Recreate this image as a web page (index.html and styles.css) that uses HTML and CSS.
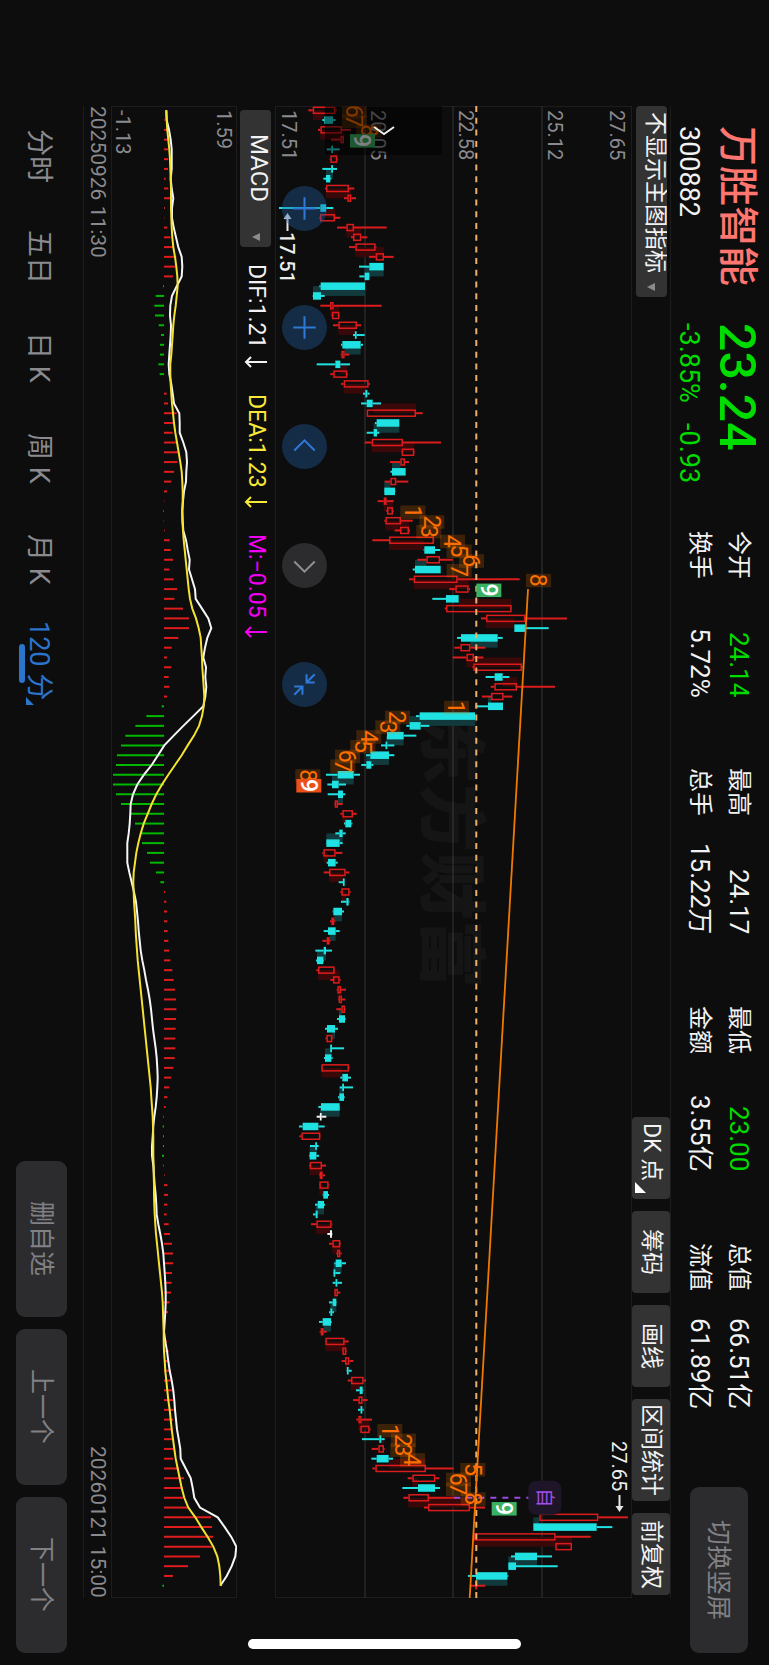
FILE: index.html
```html
<!DOCTYPE html>
<html lang="zh-CN">
<head>
<meta charset="utf-8">
<meta name="viewport" content="width=device-width, initial-scale=1">
<title>万胜智能 300882</title>
<link rel="stylesheet" href="styles.css">
</head>
<body>
<main class="stage">
  <header class="quote">
    <div class="quote-name">
      <h1>万胜智能</h1>
      <span class="code">300882</span>
    </div>
    <div class="quote-price down">
      <strong>23.24</strong>
      <div class="change"><span>-3.85%</span><span>-0.93</span></div>
    </div>
    <dl class="stats">
      <div><dt>今开</dt><dd class="down">24.14</dd></div>
      <div><dt>最高</dt><dd>24.17</dd></div>
      <div><dt>最低</dt><dd class="down">23.00</dd></div>
      <div><dt>总值</dt><dd>66.51亿</dd></div>
      <div><dt>换手</dt><dd>5.72%</dd></div>
      <div><dt>总手</dt><dd>15.22万</dd></div>
      <div><dt>金额</dt><dd>3.55亿</dd></div>
      <div><dt>流值</dt><dd>61.89亿</dd></div>
    </dl>
    <button class="soft-button rotate-button" type="button">切换竖屏</button>
  </header>

  <div class="toolbar">
    <div class="picker picker-main">
      <select aria-label="主图指标"><option>不显示主图指标</option></select>
    </div>
    <div class="tools">
      <button class="has-menu" type="button">DK 点</button>
      <button type="button">筹码</button>
      <button type="button">画线</button>
      <button type="button">区间统计</button>
      <button type="button">前复权</button>
    </div>
  </div>

  <section class="price-chart" aria-label="K线图">
    <svg class="plot" viewBox="0 0 357 1492"><g id="price" transform="translate(357 0) rotate(90)"></g></svg>
    <button class="drawer" type="button" aria-label="展开">
      <svg viewBox="0 0 24 12" width="24" height="12"><path d="M2 2L12 9L22 2"/></svg>
    </button>
    <div class="controls">
      <button type="button" aria-label="放大"><svg viewBox="-22 -22 44 44"><path d="M-11 0H11M0 -11V11"/></svg></button>
      <button type="button" aria-label="缩小"><svg viewBox="-22 -22 44 44"><path d="M-11 0H11M0 -11V11"/></svg></button>
      <button type="button" aria-label="向左"><svg viewBox="-22 -22 44 44"><path d="M-10 4L0 -6L10 4"/></svg></button>
      <button class="off" type="button" aria-label="向右"><svg viewBox="-22 -22 44 44"><path d="M-10 -4L0 6L10 -4"/></svg></button>
      <button type="button" aria-label="收起"><svg viewBox="-22 -22 44 44"><path d="M2 -10V-2H10M2 -2L10 -10M-2 10V2H-10M-2 2L-10 10"/></svg></button>
    </div>
  </section>

  <div class="indicator">
    <div class="picker picker-sub">
      <select aria-label="副图指标"><option>MACD</option></select>
    </div>
    <span class="reading dif">DIF:1.21<svg viewBox="0 0 24 12" width="24" height="12"><path d="M23 6H2M7 1L2 6L7 11"/></svg></span>
    <span class="reading dea">DEA:1.23<svg viewBox="0 0 24 12" width="24" height="12"><path d="M23 6H2M7 1L2 6L7 11"/></svg></span>
    <span class="reading bar">M:−0.05<svg viewBox="0 0 24 12" width="24" height="12"><path d="M23 6H2M7 1L2 6L7 11"/></svg></span>
  </div>

  <section class="macd-chart" aria-label="MACD">
    <svg class="plot" viewBox="0 0 126 1492"><g id="macd" transform="translate(126 0) rotate(90)"></g></svg>
  </section>

  <div class="dates"><time>20250926 11:30</time><time>20260121 15:00</time></div>

  <footer class="bottom">
    <nav class="periods">
      <button type="button">分时</button>
      <button type="button">五日</button>
      <button type="button">日 K</button>
      <button type="button">周 K</button>
      <button type="button">月 K</button>
      <button class="active" type="button">120 分</button>
    </nav>
    <div class="pager">
      <button class="soft-button" type="button">删自选</button>
      <button class="soft-button" type="button">上一个</button>
      <button class="soft-button" type="button">下一个</button>
    </div>
  </footer>
  <div class="home-bar"></div>
</main>
<script src="chart.js"></script>
</body>
</html>
```

FILE: styles.css
```css
:root {
  --bg: #0d0d0d;
  --line: #1d1d1e;
  --pill: #333334;
  --soft: #2c2c2e;
  --muted: #8a8a8f;
  --green: #00dc00;
  --blue: #2b74cc;
  --edge: 106px;
  --plot-end: 67px;
}

* { box-sizing: border-box; }

/* Lines run top to bottom and rows stack right to left: a landscape page on a portrait screen. */
html {
  height: 100%;
  background: var(--bg);
  writing-mode: vertical-rl;
  text-orientation: sideways;
}

body {
  margin: 0;
  height: 100%;
}

body, button, select {
  font-family: Roboto, "Noto Sans CJK SC", sans-serif;
}

button, select {
  margin: 0;
  padding: 0;
  border: 0;
  color: inherit;
  font-size: 24px;
  line-height: 1;
  writing-mode: vertical-rl;
  text-orientation: sideways;
}

svg {
  display: block;
  flex: none;
  writing-mode: horizontal-tb;
}

.stage {
  position: relative;
  display: flex;
  flex-direction: column;
  inline-size: 100%;
  block-size: 100vw;
  color: #f2f2f2;
}

.down { color: var(--green); }

.quote {
  display: flex;
  align-items: center;
  block-size: 98px;
  padding-block-start: 3px;
  padding-inline: 126px 12px;
}

.quote-name { inline-size: 197px; }

.quote-name h1 {
  margin: 0;
  color: #ff7570;
  font-size: 40px;
  font-weight: 500;
  line-height: 60px;
}

.code {
  display: block;
  font-size: 27px;
  line-height: 36px;
}

.quote-price { inline-size: 208px; }

.quote-price strong {
  display: block;
  font-size: 50px;
  font-weight: 500;
  line-height: 60px;
}

.change {
  display: flex;
  gap: 20px;
  font-size: 27px;
  line-height: 36px;
}

.stats {
  flex: 1;
  display: grid;
  grid-template-columns: repeat(4, 1fr);
  column-gap: 71px;
  margin: 0;
  margin-inline-end: 78px;
  line-height: 39px;
}

.stats div {
  display: flex;
  justify-content: space-between;
}

.stats dt { font-size: 24px; }
.stats dd { margin: 0; font-size: 26px; }

.soft-button {
  border-radius: 9px;
  background: var(--soft);
  color: #808085;
  font-size: 25px;
}

.rotate-button {
  inline-size: 166px;
  block-size: 58px;
}

.toolbar {
  display: flex;
  justify-content: space-between;
  align-items: center;
  block-size: 39px;
  margin-inline: var(--edge) var(--plot-end);
  border-block-start: 1px solid var(--line);
}

.picker {
  position: relative;
  block-size: 31px;
}

.picker select {
  inline-size: 100%;
  block-size: 100%;
  border-radius: 4px;
  background: var(--pill);
  font-size: 23px;
  appearance: none;
}

.picker::after {
  content: "";
  position: absolute;
  inset-inline-end: 6px;
  inset-block-start: 12px;
  border: 4px solid transparent;
  border-block-start: 8px solid var(--muted);
  border-block-end: 0;
}

.picker-main { inline-size: 191px; }
.picker-main select { padding-inline-start: 6px; }
.picker-sub { inline-size: 137px; }
.picker-sub select { padding-inline-start: 24px; font-size: 24px; }

.tools {
  display: flex;
  gap: 12px;
  padding-inline-end: 3px;
}

.tools button {
  position: relative;
  min-inline-size: 82px;
  block-size: 38px;
  padding-inline: 5px;
  border-radius: 4px;
  background: var(--pill);
  font-size: 23px;
}

.tools .has-menu {
  padding-inline-end: 16px;
}

.has-menu::after {
  content: "";
  position: absolute;
  inset-inline-end: 6px;
  inset-block-end: 3px;
  border-inline-start: 11px solid transparent;
  border-block-end: 11px solid #fff;
}

.price-chart, .macd-chart {
  position: relative;
  margin-inline: var(--edge) var(--plot-end);
}

.plot { height: 100%; }

.drawer {
  position: absolute;
  inset-inline-start: 0;
  inset-block-start: 190px;
  display: flex;
  align-items: center;
  justify-content: center;
  inline-size: 49px;
  block-size: 117px;
  background: rgba(0, 0, 0, .5);
}

.drawer path {
  fill: none;
  stroke: #eee;
  stroke-width: 2;
}

.controls {
  position: absolute;
  inset-inline-start: 80px;
  inset-block-end: 7px;
  display: flex;
  gap: 74px;
}

.controls button {
  width: 45px;
  height: 45px;
  border-radius: 50%;
  background: rgba(36, 92, 160, .4);
}

.controls .off { background: var(--soft); }
.controls svg { width: 45px; height: 45px; }
.controls path { fill: none; stroke: #2f78d6; stroke-width: 2; }
.controls .off path { stroke: #8f8f94; }

.indicator {
  display: flex;
  align-items: center;
  gap: 26px;
  block-size: 38px;
  padding-inline-start: 110px;
  font-size: 23px;
}

.picker-sub { margin-inline-end: -9px; }

.reading {
  display: flex;
  align-items: center;
  gap: 8px;
}

.reading path { fill: none; stroke: currentColor; stroke-width: 2; }

.dea { color: #f8e837; }
.bar { color: #f000f0; }

.dates {
  display: flex;
  justify-content: space-between;
  block-size: 28px;
  margin-inline: var(--edge) var(--plot-end);
  border-block-end: 1px solid var(--line);
  color: var(--muted);
  font-size: 21px;
  line-height: 26px;
}

.bottom {
  flex: 1;
  display: flex;
  justify-content: space-between;
  align-items: center;
  padding-inline: 105px 12px;
}

.periods { display: flex; }

.periods button {
  position: relative;
  inline-size: 101px;
  block-size: 51px;
  padding-block-start: 6px;
  background: none;
  color: var(--muted);
  font-size: 27px;
}

.periods .active { color: var(--blue); }

.active::before {
  content: "";
  position: absolute;
  inset-inline-start: 34px;
  inset-block-end: 3px;
  inline-size: 39px;
  block-size: 6px;
  border-radius: 3px;
  background: var(--blue);
}

.active::after {
  content: "";
  position: absolute;
  inset-inline-end: 6px;
  inset-block-end: 10px;
  border-inline-start: 8px solid transparent;
  border-block-end: 8px solid var(--blue);
}

.pager { display: flex; gap: 12px; }

.pager button {
  inline-size: 156px;
  block-size: 51px;
}

.home-bar {
  position: absolute;
  inset-inline-end: 16px;
  inset-block: 248px;
  inline-size: 10px;
  border-radius: 5px;
  background: #fff;
}

/* Chart marks */
.frame { fill: none; stroke: #1d1d1e; stroke-width: 1; }
.grid { stroke: #212122; stroke-width: 2; }
.axis { fill: var(--muted); font-size: 20px; }
.watermark { fill: #fff; fill-opacity: .035; font-size: 68px; font-weight: 900; }
.up-day { fill: #390809; }
.down-day { fill: #12393b; }
.up { stroke: #dc1c1c; stroke-width: 2; fill: none; }
.fall { stroke: #20e2e2; stroke-width: 2; fill: #20e2e2; }
.flat { stroke: #f4f4f4; stroke-width: 2; fill: #f4f4f4; }
.body { stroke-width: 1.5; }
.last-price { stroke: #eeb06a; stroke-width: 2; stroke-dasharray: 6 5.7; }
.trend { stroke: #f07800; stroke-width: 1.8; }
.count-box { fill: #ff7800; fill-opacity: .2; }
.count-box.sell { fill: #3bb163; fill-opacity: 1; }
.count-box.buy { fill: #ea5018; fill-opacity: 1; }
.count { fill: #ff6e00; font-size: 23px; text-anchor: middle; }
.count.solid { fill: #fff; font-weight: 500; }
.extreme { fill: #ececec; font-size: 20px; }
.extreme.strong { font-weight: 500; }
.pointer { fill: none; stroke: #e6e6e6; stroke-width: 2; }
.pointer-head { fill: #e6e6e6; }
.own-line { stroke: #9a4be0; stroke-width: 2; stroke-dasharray: 6 6; }
.own-box { fill: #1e1528; }
.own { fill: #a24ee8; font-size: 19px; text-anchor: middle; }
.hist-up { stroke: #e01c1c; stroke-width: 2; }
.hist-down { stroke: #00b800; stroke-width: 2; }
.dif-line { fill: none; stroke: #f6f6f6; stroke-width: 2; }
.dea-line { fill: none; stroke: #f4e233; stroke-width: 2; }
```

FILE: chart.js
```js
const NS = 'http://www.w3.org/2000/svg';
const STEP = 9.771;
const FIRST = 4.3;
const barX = i => FIRST + STEP * i;

function add(parent, tag, cls, attrs, text) {
  const el = document.createElementNS(NS, tag);
  if (cls) el.setAttribute('class', cls);
  for (const key in attrs) el.setAttribute(key, attrs[key]);
  if (text) el.textContent = text;
  parent.appendChild(el);
  return el;
}

/* direction, body low, body high, wick low, wick high (levels are thirds of a unit) */
const bars = `R 128 196 115 200|C 163 189 157 197|R 151 216 144 242|R 211 222 183 222|C 184 189 170 209
R 181 202 179 204|C 184 189 157 201|C 168 181 160 184|R 168 237 165 253|R 232 244 222 258
C 151 168 27 190|R 150 195 148 211|R 229 252 201 350|R 249 274 243 292|R 256 317 237 319
R 317 342 297 371|C 298 341 267 341|C 284 298 268 299|C 152 285 148 285|C 129 153 128 164
R 180 191 151 335|R 186 208 184 210|R 205 261 189 273|C 256 260 249 284|C 217 272 213 279
R 214 224 212 238|C 196 211 140 240|R 190 232 181 234|R 221 296 213 300|C 286 292 279 299
C 290 308 273 333|R 290 438 290 458|C 320 388 315 388|C 311 321 290 328|R 305 399 284 513
R 395 433 394 434|R 391 405 360 417|C 366 407 361 407|R 361 379 344 415|C 343 375 342 376
R 341 350 323 371|R 351 369 349 371|R 346 393 343 428|R 390 417 374 420|R 357 492 307 493
C 463 495 461 511|R 469 510 442 548|C 435 512 428 512|R 431 563 417 749|R 556 596 538 600
C 528 566 487 566|R 528 725 524 726|R 648 766 633 891|C 733 766 733 836|C 573 683 561 698
R 571 601 553 646|R 589 612 548 640|R 610 756 607 758|C 674 698 647 718|R 673 741 662 855
R 663 701 636 727|C 654 699 616 699|C 449 615 438 616|C 419 452 409 478|C 351 401 351 439
C 348 352 333 373|C 301 357 288 373|C 289 304 274 310|C 203 251 168 270|C 186 206 172 228
C 204 219 173 226|R 194 204 193 218|R 217 249 211 260|C 226 244 222 247|C 208 218 196 227
C 169 209 168 218|R 160 197 157 217|C 174 197 170 203|R 177 227 161 238|C 220 224 206 224
R 214 239 211 242|C 229 236 213 238|C 190 216 188 222|R 184 193 180 196|C 174 197 161 209
R 170 179 157 182|C 161 168 136 186|C 141 160 138 162|R 144 194 139 195|R 189 209 181 212
R 202 213 200 228|R 206 216 204 226|R 214 225 199 227|C 207 225 201 227|C 171 195 165 204
R 169 187 166 189|C 182 186 182 222|C 165 184 162 188|R 154 237 153 238|C 217 234 211 243
C 217 222 209 249|C 208 222 204 224|C 153 209 145 210|W 150 155 140 169|C 98 145 87 164
R 94 151 88 152|C 137 141 120 146|C 119 139 117 147|R 119 156 117 168|R 149 158 147 165
R 148 176 147 178|C 160 174 158 177|C 143 162 135 165|C 137 143 129 143|R 139 185 123 187
W 180 186 172 187|R 187 211 177 213|R 201 211 199 215|C 197 215 193 228|C 191 196 190 211
C 197 202 188 216|R 193 204 192 211|C 188 199 177 200|C 181 187 177 192|C 158 183 147 185
R 152 161 149 170|R 166 224 165 236|R 217 229 216 231|R 225 238 215 250|C 231 236 230 245
R 243 281 233 288|C 269 278 258 280|R 265 278 249 293|C 272 277 264 281|R 265 275 259 306
R 271 299 269 302|C 328 334 276 344|R 325 342 305 344|C 320 356 304 369|R 316 468 307 551
R 427 496 413 508|C 444 495 397 510|R 415 477 400 560|R 474 600 462 645|R 808 985 808 1074
C 790 980 790 1027|R 611 857 608 962|R 856 906 856 906|C 735 801 723 846|C 715 738 714 863
C 618 712 594 715|R 617 621 601 646`.split(/[|\n]/).map(row => {
  const [kind, ...n] = row.trim().split(' ');
  const [lo, hi, low, high] = n.map(Number);
  return { kind, lo, hi, low, high };
});

function drawPrice() {
  const svg = document.getElementById('price');
  const y = level => 362 - level / 3;

  add(svg, 'rect', 'frame', { x: 0.5, y: 0.5, width: 1491, height: 356 });
  for (const gy of [90, 179, 267]) add(svg, 'line', 'grid', { x1: 0, x2: 1492, y1: gy, y2: gy });
  add(svg, 'text', 'watermark', { x: 610, y: 205 }, '东方财富');
  [['27.65', 159], ['25.12', 221], ['22.58', 310], ['20.05', 398], ['17.51', 487]]
    .forEach(([t, v]) => add(svg, 'text', 'axis', { x: 4, y: v - 137 }, t));

  for (let i = 0; i < bars.length; i += 2) {
    const a = bars[i], b = bars[i + 1];
    if (!b) break;
    const open = a.kind === 'R' ? a.lo : a.hi;
    const close = b.kind === 'R' ? b.hi : b.lo;
    const top = Math.max(open, close), bottom = Math.min(open, close);
    add(svg, 'rect', close >= open ? 'up-day' : 'down-day',
      { x: barX(i), y: y(top), width: STEP, height: (top - bottom) / 3 });
  }

  bars.forEach((b, i) => {
    const x = barX(i);
    const cls = { R: 'up', C: 'fall', W: 'flat' }[b.kind];
    if (b.low < b.lo) add(svg, 'line', cls, { x1: x, x2: x, y1: y(b.low), y2: y(b.lo) });
    if (b.high > b.hi) add(svg, 'line', cls, { x1: x, x2: x, y1: y(b.hi), y2: y(b.high) });
    add(svg, 'rect', cls + ' body', {
      x: x - 3, y: y(b.hi) + 0.75, width: 6, height: Math.max((b.hi - b.lo) / 3 - 1.5, 0.3)
    });
  });

  const own = barX(142);
  add(svg, 'line', 'own-line', { x1: own, x2: own, y1: y(553), y2: y(777) });
  add(svg, 'rect', 'own-box', { x: own - 17, y: y(874), width: 34, height: 33, rx: 8 });
  add(svg, 'text', 'own', { x: own, y: y(825) + 7 }, '自');

  add(svg, 'line', 'last-price', { x1: 0, x2: 1492, y1: 155.7, y2: 155.7 });
  add(svg, 'line', 'trend', { x1: 483, y1: 104, x2: 1492, y2: 162.3 });

  const runs = [
    { bar: 0, n: 6, at: [215, 215, 258, 239], last: 'sell' },
    { bar: 41, n: 1, at: [390, 447, 438, 509, 529, 566, 529, 767, 618], last: 'sell' },
    { bar: 61, n: 1, at: [521, 344, 315, 258, 240, 194, 180, 75, 78], last: 'buy' },
    { bar: 135, n: 1, at: [321, 362, 360, 389, 570, 527, 527, 571, 664], last: 'sell' }
  ];
  for (const run of runs) {
    run.at.forEach((level, k) => {
      const num = run.n + k, x = barX(run.bar + k) + 1, solid = num === 9;
      add(svg, 'rect', 'count-box ' + (solid ? run.last : ''), { x: x - 6.5, y: y(level + 76), width: 13.5, height: 25 });
      add(svg, 'text', 'count ' + (solid ? 'solid' : ''), { x, y: y(level + 38) + 8 }, String(num));
    });
  }

  add(svg, 'text', 'extreme', { x: 1335, y: 20 }, '27.65');
  add(svg, 'path', 'pointer', { d: 'M1389 12.500H1402' });
  add(svg, 'path', 'pointer-head', { d: 'M1400 8.500L1406 12.500L1400 16.500Z' });
  add(svg, 'path', 'pointer', { d: 'M125 344.500H111' });
  add(svg, 'path', 'pointer-head', { d: 'M113 340.500L107 344.500L113 348.500Z' });
  add(svg, 'text', 'extreme strong', { x: 126, y: 352 }, '17.51');
}

const hist = [0, 2, 10, 18, 12, 13, 12, 5, 13, 22, 3, 1, 10, 19, 29, 37, 34, 27, -3, -25,
  -29, -27, -16, -9, -12, -12, -17, -13, 0, 8, 12, 38, 33, 26, 36, 42, 40, 30, 22, 9,
  1, -2, -1, 2, 17, 20, 27, 16, 29, 39, 31, 57, 75, 75, 43, 23, 9, 22, 14, 16,
  9, -7, -53, -86, -116, -129, -141, -144, -153, -153, -144, -129, -100, -87, -70, -66, -51, -42, -24, -11,
  3, 7, 9, 10, 11, 13, 15, 19, 25, 29, 33, 36, 37, 36, 35, 34, 34, 32, 28, 22,
  16, 10, 5, -2, -4, -3, -3, -6, -2, 2, 10, 12, 10, 8, 14, 18, 24, 27, 27, 24,
  23, 21, 17, 12, 3, 1, 9, 14, 15, 19, 24, 27, 29, 29, 27, 27, 27, 31, 27, 45,
  60, 57, 57, 75, 141, 144, 147, 144, 108, 72, 27, -5];

const dif = [499, 500, 507, 512, 515, 515, 515, 512, 515, 520, 516, 516, 521, 528, 535, 545, 547, 545, 530, 516,
  511, 510, 513, 512, 510, 508, 506, 508, 514, 518, 522, 538, 539, 539, 550, 559, 561, 559, 558, 552,
  549, 547, 548, 550, 558, 563, 569, 567, 576, 585, 587, 606, 625, 634, 622, 615, 610, 618, 616, 619,
  616, 610, 580, 550, 521, 493, 474, 455, 432, 412, 399, 392, 391, 389, 386, 382, 382, 382, 388, 395,
  402, 408, 411, 414, 416, 419, 422, 427, 433, 438, 444, 449, 453, 456, 459, 463, 467, 470, 472, 473,
  472, 470, 467, 463, 460, 458, 456, 456, 460, 462, 464, 467, 469, 470, 475, 481, 486, 490, 492, 494,
  496, 497, 497, 496, 494, 492, 496, 501, 505, 509, 515, 520, 523, 525, 528, 531, 536, 541, 542, 557,
  572, 578, 583, 600, 653, 674, 694, 709, 706, 695, 680, 661];

const dea = [499, 500, 502, 505, 508, 510, 511, 512, 513, 513, 513, 514, 515, 517, 520, 525, 529, 532, 533, 530,
  527, 523, 520, 518, 516, 514, 511, 511, 512, 514, 516, 519, 522, 526, 531, 536, 541, 545, 547, 548,
  548, 547, 547, 549, 551, 554, 557, 560, 563, 566, 570, 577, 588, 596, 602, 604, 606, 607, 609, 611,
  613, 611, 606, 597, 582, 563, 545, 525, 505, 486, 469, 455, 443, 431, 422, 415, 409, 405, 401, 400,
  401, 402, 404, 406, 407, 409, 411, 413, 416, 419, 422, 425, 428, 431, 434, 437, 440, 443, 446, 449,
  452, 454, 456, 458, 459, 460, 460, 460, 461, 461, 462, 462, 463, 464, 466, 468, 471, 474, 477, 480,
  483, 486, 488, 489, 490, 491, 491, 492, 494, 496, 499, 502, 505, 509, 512, 515, 519, 523, 527, 533,
  539, 545, 553, 565, 586, 604, 623, 640, 652, 658, 661, 662];

function drawMacd() {
  const svg = document.getElementById('macd');
  const y = level => (711 - level) / 3;
  const zero = y(492);
  add(svg, 'rect', 'frame', { x: 0.5, y: 0.5, width: 1491, height: 125 });
  add(svg, 'text', 'axis', { x: 4, y: 20 }, '1.59');
  add(svg, 'text', 'axis', { x: 4, y: 121 }, '-1.13');
  hist.forEach((h, i) => {
    if (h) add(svg, 'line', h > 0 ? 'hist-up' : 'hist-down', { x1: barX(i), x2: barX(i), y1: zero, y2: zero - h / 3 });
  });
  const points = series => series.map((v, i) => barX(i).toFixed(1) + ',' + y(v).toFixed(1)).join(' ');
  add(svg, 'polyline', 'dif-line', { points: points(dif) });
  add(svg, 'polyline', 'dea-line', { points: points(dea) });
}

drawPrice();
drawMacd();
```
